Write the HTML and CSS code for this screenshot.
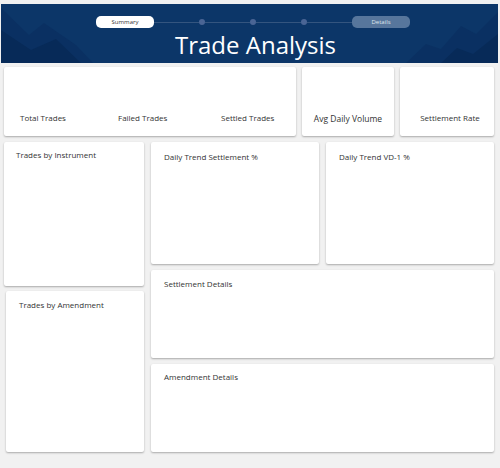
FILE: index.html
```html
<!DOCTYPE html>
<html lang="en">
<head>
    <meta charset="UTF-8">
    <title>Trade Analysis</title>
    <link rel="stylesheet" href="styles.css">
</head>
<body>
    <div class="header">
        <svg class="peaks" viewBox="0 0 497 59" preserveAspectRatio="none">
            <polygon points="0,4 28,31 43,19 75,41 92,59 0,59" fill="#0a3062"/>
            <polygon points="0,26 30,46 55,35 80,59 0,59" fill="#072a58"/>
            <polygon points="497,8 475,30 460,22 440,45 425,40 405,59 497,59" fill="#0a3062"/>
            <polygon points="497,30 472,50 456,44 440,59 497,59" fill="#072a58"/>
        </svg>
        <div class="stepper">
            <span class="step active">Summary</span>
            <span class="line"></span>
            <span class="dot"></span>
            <span class="line"></span>
            <span class="dot"></span>
            <span class="line"></span>
            <span class="dot"></span>
            <span class="line"></span>
            <span class="step">Details</span>
        </div>
        <h1>Trade Analysis</h1>
    </div>

    <div class="kpis">
        <div class="card kpi-group">
            <div class="kpi">Total Trades</div>
            <div class="kpi wide-kpi">Failed Trades</div>
            <div class="kpi">Settled Trades</div>
        </div>
        <div class="card kpi-single">Avg Daily Volume</div>
        <div class="card kpi-single small">Settlement Rate</div>
    </div>

    <div class="main">
        <div class="side">
            <div class="card panel instrument">Trades by Instrument</div>
            <div class="card panel amendment">Trades by Amendment</div>
        </div>
        <div class="content">
            <div class="card panel trend">Daily Trend Settlement %</div>
            <div class="card panel trend">Daily Trend VD-1 %</div>
            <div class="card panel wide">Settlement Details</div>
            <div class="card panel wide lower">Amendment Details</div>
        </div>
    </div>
</body>
</html>
```

FILE: styles.css
```css
body {
    font-family: "Open Sans", "Noto Sans", sans-serif;
    margin: 0;
    background-color: #f1f1f1;
    color: #333;
    width: 500px;
    height: 468px;
    overflow: hidden;
}
.header {
    position: relative;
    margin: 4px 2px 0 1px;
    height: 59px;
    background-color: #0c3668;
    overflow: hidden;
}
.peaks {
    position: absolute;
    left: 0;
    top: 0;
    width: 100%;
    height: 100%;
}
.stepper {
    position: relative;
    display: flex;
    align-items: center;
    padding: 12px 0 0 95px;
    width: 314px;
}
.step {
    width: 58px;
    height: 12px;
    border-radius: 5px;
    background-color: #57769c;
    color: #dfe6ef;
    font-size: 6px;
    line-height: 12px;
    text-align: center;
}
.step.active {
    background-color: white;
    color: #333;
}
.line {
    flex: 1;
    height: 1px;
    background-color: #34557f;
}
.dot {
    width: 6px;
    height: 6px;
    border-radius: 50%;
    background-color: #4a6595;
}
h1 {
    position: relative;
    margin: 0;
    font-size: 24px;
    font-weight: normal;
    color: white;
    text-align: center;
    line-height: 34px;
    padding-left: 12px;
}
.card {
    background-color: white;
    border-radius: 2px;
    box-shadow: 0 1px 2px rgba(0,0,0,0.3);
}
.kpis {
    display: grid;
    grid-template-columns: 292px 92px 94px;
    gap: 6px;
    margin: 4px 0 0 4px;
    height: 69px;
}
.kpi-group {
    display: flex;
    align-items: flex-end;
    padding: 0 0 13px 16px;
    font-size: 8px;
}
.kpi {
    flex: none;
    width: 98px;
}
.kpi.wide-kpi {
    width: 103px;
}
.kpi-single {
    display: flex;
    align-items: flex-end;
    justify-content: center;
    padding-bottom: 12px;
    font-size: 8.5px;
}
.kpi-single.small {
    font-size: 8px;
    padding: 0 0 13px 6px;
}
.main {
    display: grid;
    grid-template-columns: 140px 343px;
    gap: 7px;
    margin: 6px 0 0 4px;
}
.side {
    display: flex;
    flex-direction: column;
    gap: 5px;
}
.panel {
    font-size: 8px;
    padding: 8px 13px;
    box-sizing: border-box;
}
.instrument {
    height: 144px;
    padding: 7px 12px;
}
.amendment {
    height: 161px;
    margin-left: 2px;
}
.content {
    display: grid;
    grid-template-columns: 168px 168px;
    grid-template-rows: 122px 88px 88px;
    gap: 6px 7px;
}
.trend {
    padding-top: 9px;
}
.wide {
    grid-column: 1 / 3;
    padding-top: 8px;
}
.wide.lower {
    padding-top: 7px;
}
```
